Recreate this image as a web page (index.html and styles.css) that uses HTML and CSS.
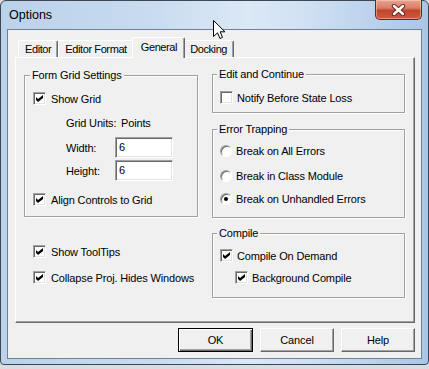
FILE: index.html
```html
<!DOCTYPE html>
<html lang="en">
<head>
    <meta charset="UTF-8">
    <title>Options</title>
    <link rel="stylesheet" href="styles.css">
</head>
<body>
    <div class="window">
        <div class="titlebar">
            <span class="title">Options</span>
            <button class="close" title="Close">
                <svg width="15" height="12" viewBox="0 0 15 12">
                    <path d="M3 2 L12 10 M12 2 L3 10" stroke="#6a2a1e" stroke-width="4.4" stroke-linecap="round"/>
                    <path d="M3 2 L12 10 M12 2 L3 10" stroke="#fff" stroke-width="2.4" stroke-linecap="round"/>
                </svg>
            </button>
        </div>

        <div class="client">
            <div class="tabs">
                <span class="tab">Editor</span>
                <span class="tab">Editor Format</span>
                <span class="tab active">General</span>
                <span class="tab">Docking</span>
            </div>

            <div class="panel">
                <div class="col left">
                    <fieldset class="group grid-group">
                        <legend>Form Grid Settings</legend>
                        <label class="opt row-showgrid"><span class="box checked"></span>Show Grid</label>
                        <div class="units"><span class="units-label">Grid Units:</span><span>Points</span></div>
                        <div class="field row-width"><span class="field-label">Width:</span><span class="input">6</span></div>
                        <div class="field row-height"><span class="field-label">Height:</span><span class="input">6</span></div>
                        <label class="opt row-align"><span class="box checked"></span>Align Controls to Grid</label>
                    </fieldset>
                    <label class="opt loose row-tips"><span class="box checked"></span>Show ToolTips</label>
                    <label class="opt loose row-collapse"><span class="box checked"></span>Collapse Proj. Hides Windows</label>
                </div>

                <div class="col right">
                    <fieldset class="group edit-group">
                        <legend>Edit and Continue</legend>
                        <label class="opt row-notify"><span class="box"></span>Notify Before State Loss</label>
                    </fieldset>
                    <fieldset class="group error-group">
                        <legend>Error Trapping</legend>
                        <label class="opt row-all"><span class="radio"></span>Break on All Errors</label>
                        <label class="opt row-class"><span class="radio"></span>Break in Class Module</label>
                        <label class="opt row-unhandled"><span class="radio on"></span>Break on Unhandled Errors</label>
                    </fieldset>
                    <fieldset class="group compile-group">
                        <legend>Compile</legend>
                        <label class="opt row-demand"><span class="box checked"></span>Compile On Demand</label>
                        <label class="opt row-background"><span class="box checked"></span>Background Compile</label>
                    </fieldset>
                </div>
            </div>

            <div class="buttons">
                <button class="btn default">OK</button>
                <button class="btn">Cancel</button>
                <button class="btn">Help</button>
            </div>
        </div>

        <!-- mouse pointer left on the title bar -->
        <svg class="cursor" width="13" height="20" viewBox="0 0 13 20">
            <path d="M0.5 0.5 L0.5 16.5 L4.5 12.8 L7 18.5 L9.5 17.4 L7.1 11.8 L12 11.8 Z" fill="#fff" stroke="#000" stroke-width="1" stroke-linejoin="round"/>
        </svg>
    </div>
</body>
</html>
```

FILE: styles.css
```css
* {
    box-sizing: border-box;
}
body {
    margin: 0;
    width: 429px;
    height: 369px;
    overflow: hidden;
    background: #d9dde2;
    font-family: "Liberation Sans", Arial, sans-serif;
    font-size: 11px;
    letter-spacing: -0.15px;
    color: #000;
}
.window {
    position: relative;
    width: 429px;
    height: 365px;
    padding: 0 6px 5px;
    border: 1px solid #3c4855;
    border-radius: 6px 6px 4px 4px;
    background: linear-gradient(90deg, #bcd2ea 0%, #c8dbef 35%, #dbe8f6 58%, #cfe0f2 72%, #aac6e7 100%);
    display: flex;
    flex-direction: column;
}
.titlebar {
    height: 28px;
    flex-shrink: 0;
    display: flex;
    justify-content: space-between;
    align-items: flex-start;
}
.title {
    margin: 7px 0 0 2px;
    font-size: 12.5px;
    line-height: 14px;
    letter-spacing: 0;
}
.close {
    width: 47px;
    height: 20px;
    margin-top: -1px;
    padding: 0;
    border: 1px solid #6b2419;
    border-top: none;
    border-radius: 0 0 5px 5px;
    background: linear-gradient(#e7a493 0%, #d97d66 42%, #c2452b 55%, #cf5b3d 100%);
    box-shadow: inset 0 0 0 1px rgba(255, 220, 210, 0.45);
    display: flex;
    align-items: center;
    justify-content: center;
}
.client {
    height: 330px;
    border: 1px solid #6e8196;
    background: #f0f0f0;
    padding: 7px 6px 0 7px;
}

/* tab strip */
.tabs {
    height: 20px;
    padding-left: 3px;
    display: flex;
    align-items: flex-end;
}
.tab {
    height: 17px;
    padding: 0 6px;
    line-height: 16px;
    letter-spacing: -0.4px;
    border: 1px solid;
    border-bottom: none;
    border-color: #fff #696969 transparent #fff;
    border-radius: 2px 2px 0 0;
    box-shadow: inset -1px 0 0 #a0a0a0;
    white-space: nowrap;
}
.tab.active {
    position: relative;
    z-index: 1;
    height: 21px;
    margin: 0 -2px -1px;
    padding: 0 7px 0 8px;
    line-height: 18px;
    background: #f0f0f0;
}
.panel {
    height: 266px;
    border: 1px solid;
    border-color: #fff #696969 #696969 #fff;
    box-shadow: inset -1px -1px 0 #a0a0a0;
    padding: 11px 0 0 8px;
    display: grid;
    grid-template-columns: 174px 193px;
    column-gap: 14px;
    align-items: start;
}
.col {
    display: flex;
    flex-direction: column;
}
.right {
    margin-top: -1px;
}

/* group boxes */
.group {
    margin: 0;
    min-width: 0;
    padding: 0 7px;
    border: 1px solid #a0a0a0;
    box-shadow: inset 1px 1px 0 #fff, 1px 1px 0 #fff;
}
.group legend {
    margin-left: -3px;
    padding: 0 2px;
    line-height: 13px;
    background: #f0f0f0;
}
.grid-group {
    padding: 0 7px 9px 8px;
}
.edit-group {
    padding-bottom: 7px;
}
.error-group {
    margin-top: 10px;
    padding-bottom: 11px;
}
.compile-group {
    margin-top: 9px;
    padding-bottom: 12px;
}

/* check boxes and option buttons */
.opt {
    height: 15px;
    display: flex;
    align-items: center;
    gap: 4px;
    white-space: nowrap;
}
.left .opt {
    gap: 5px;
}
.box {
    position: relative;
    width: 13px;
    height: 13px;
    flex-shrink: 0;
    background: #fff;
    border: 1px solid;
    border-color: #a0a0a0 #fff #fff #a0a0a0;
    box-shadow: inset 1px 1px 0 #696969, inset -1px -1px 0 #e3e3e3;
}
.box.checked::after {
    content: "";
    position: absolute;
    left: 2px;
    top: 2px;
    width: 7px;
    height: 7px;
    background: #000;
    clip-path: polygon(0 28%, 29% 57%, 100% 0, 100% 43%, 29% 100%, 0 71%);
}
.radio {
    position: relative;
    width: 12px;
    height: 12px;
    flex-shrink: 0;
    border-radius: 50%;
    background: #fff;
    border: 1px solid;
    border-color: #a0a0a0 #fff #fff #a0a0a0;
    box-shadow: inset 1px 1px 0 #696969;
}
.radio.on::after {
    content: "";
    position: absolute;
    left: 3px;
    top: 3px;
    width: 4px;
    height: 4px;
    border-radius: 50%;
    background: #000;
}

/* rows, top to bottom */
.row-showgrid { margin-top: 9px; }
.row-align { margin-top: 11px; }
.row-tips { margin-top: 27px; }
.row-collapse { margin-top: 11px; }
.loose { margin-left: 9px; }
.row-notify { margin-top: 9px; }
.row-all { margin-top: 7px; }
.row-class { margin-top: 10px; }
.row-unhandled { margin-top: 8px; }
.row-demand { margin-top: 8px; }
.row-background { margin: 7px 0 0 15px; }

.units {
    height: 14px;
    margin: 10px 0 0 33px;
    display: flex;
    align-items: center;
}
.units-label {
    width: 55px;
}
.field {
    height: 21px;
    margin-left: 33px;
    display: flex;
    align-items: center;
}
.row-width { margin-top: 7px; }
.row-height { margin-top: 2px; }
.field-label {
    width: 49px;
}
.input {
    width: 58px;
    height: 21px;
    padding-left: 3px;
    line-height: 19px;
    background: #fff;
    border: 1px solid;
    border-color: #a0a0a0 #fff #fff #a0a0a0;
    box-shadow: inset 1px 1px 0 #696969, inset -1px -1px 0 #e3e3e3;
}

/* dialog buttons */
.buttons {
    width: 400px;
    margin-top: 5px;
    display: flex;
    justify-content: flex-end;
    gap: 7px;
}
.btn {
    width: 74px;
    height: 24px;
    padding: 0;
    font-family: inherit;
    font-size: 11px;
    letter-spacing: inherit;
    color: #000;
    background: #f0f0f0;
    border: 1px solid;
    border-color: #fff #696969 #696969 #fff;
    box-shadow: inset -1px -1px 0 #a0a0a0;
}
.btn.default {
    width: 75px;
    border-color: #000;
    box-shadow: inset 1px 1px 0 #fff, inset -1px -1px 0 #696969, inset -2px -2px 0 #a0a0a0;
}
.cursor {
    position: absolute;
    left: 212px;
    top: 19px;
}
```
